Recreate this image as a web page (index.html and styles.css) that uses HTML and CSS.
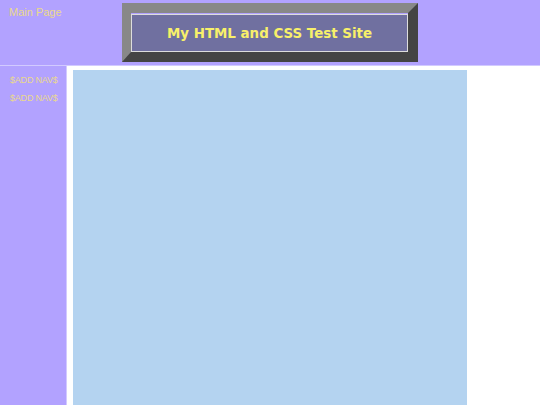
FILE: index.html
```html
<!DOCTYPE html>
<html>
<head>
<meta charset="utf-8">
<link rel="stylesheet" href="styles.css">
</head>
<body>
<div class="header">
  <a class="home" href="#">Main Page</a>
  <div class="title-box">
    <div class="title-inner">My HTML and CSS Test Site</div>
  </div>
</div>
<div class="main">
  <div class="sidebar">
    <div class="nav-item">$ADD NAV$</div>
    <div class="nav-item">$ADD NAV$</div>
  </div>
  <div class="content"></div>
</div>
</body>
</html>
```
FILE: styles.css
```css
html, body {
  margin: 0;
  padding: 0;
  height: 100%;
  background: #ffffff;
  overflow: hidden;
}
body {
  font-family: "Liberation Sans", Arial, sans-serif;
}
.header {
  height: 65px;
  background: #b2a2ff;
  border-bottom: 1px solid #d2caff;
  display: flex;
  align-items: flex-start;
}
.home {
  color: #ead98c;
  text-decoration: none;
  font-size: 11px;
  margin: 6px 0 0 9px;
  width: 113px;
}
.title-box {
  margin-top: 3px;
  width: 277px;
  border-style: solid;
  border-width: 10px 10px 10px 9px;
  border-color: #888888 #444444 #444444 #888888;
  padding: 1px 0 0 0;
}
.title-inner {
  height: 36px;
  background: #7070a0;
  border: 1px solid #dddddd;
  color: #f8f06a;
  font-family: "DejaVu Sans", Verdana, sans-serif;
  font-weight: bold;
  font-size: 13.4px;
  display: flex;
  align-items: center;
  justify-content: center;
}
.main {
  display: flex;
  height: calc(100% - 66px);
}
.sidebar {
  width: 66px;
  background: #b2a2ff;
  border-right: 1px solid #d2caff;
  padding-top: 8px;
}
.nav-item {
  color: #ead98c;
  font-size: 9px;
  margin-left: 10px;
  height: 18px;
  line-height: 12px;
  letter-spacing: -0.2px;
}
.content {
  margin: 4px 0 0 6px;
  width: 394px;
  background: #b4d3f0;
}
```
